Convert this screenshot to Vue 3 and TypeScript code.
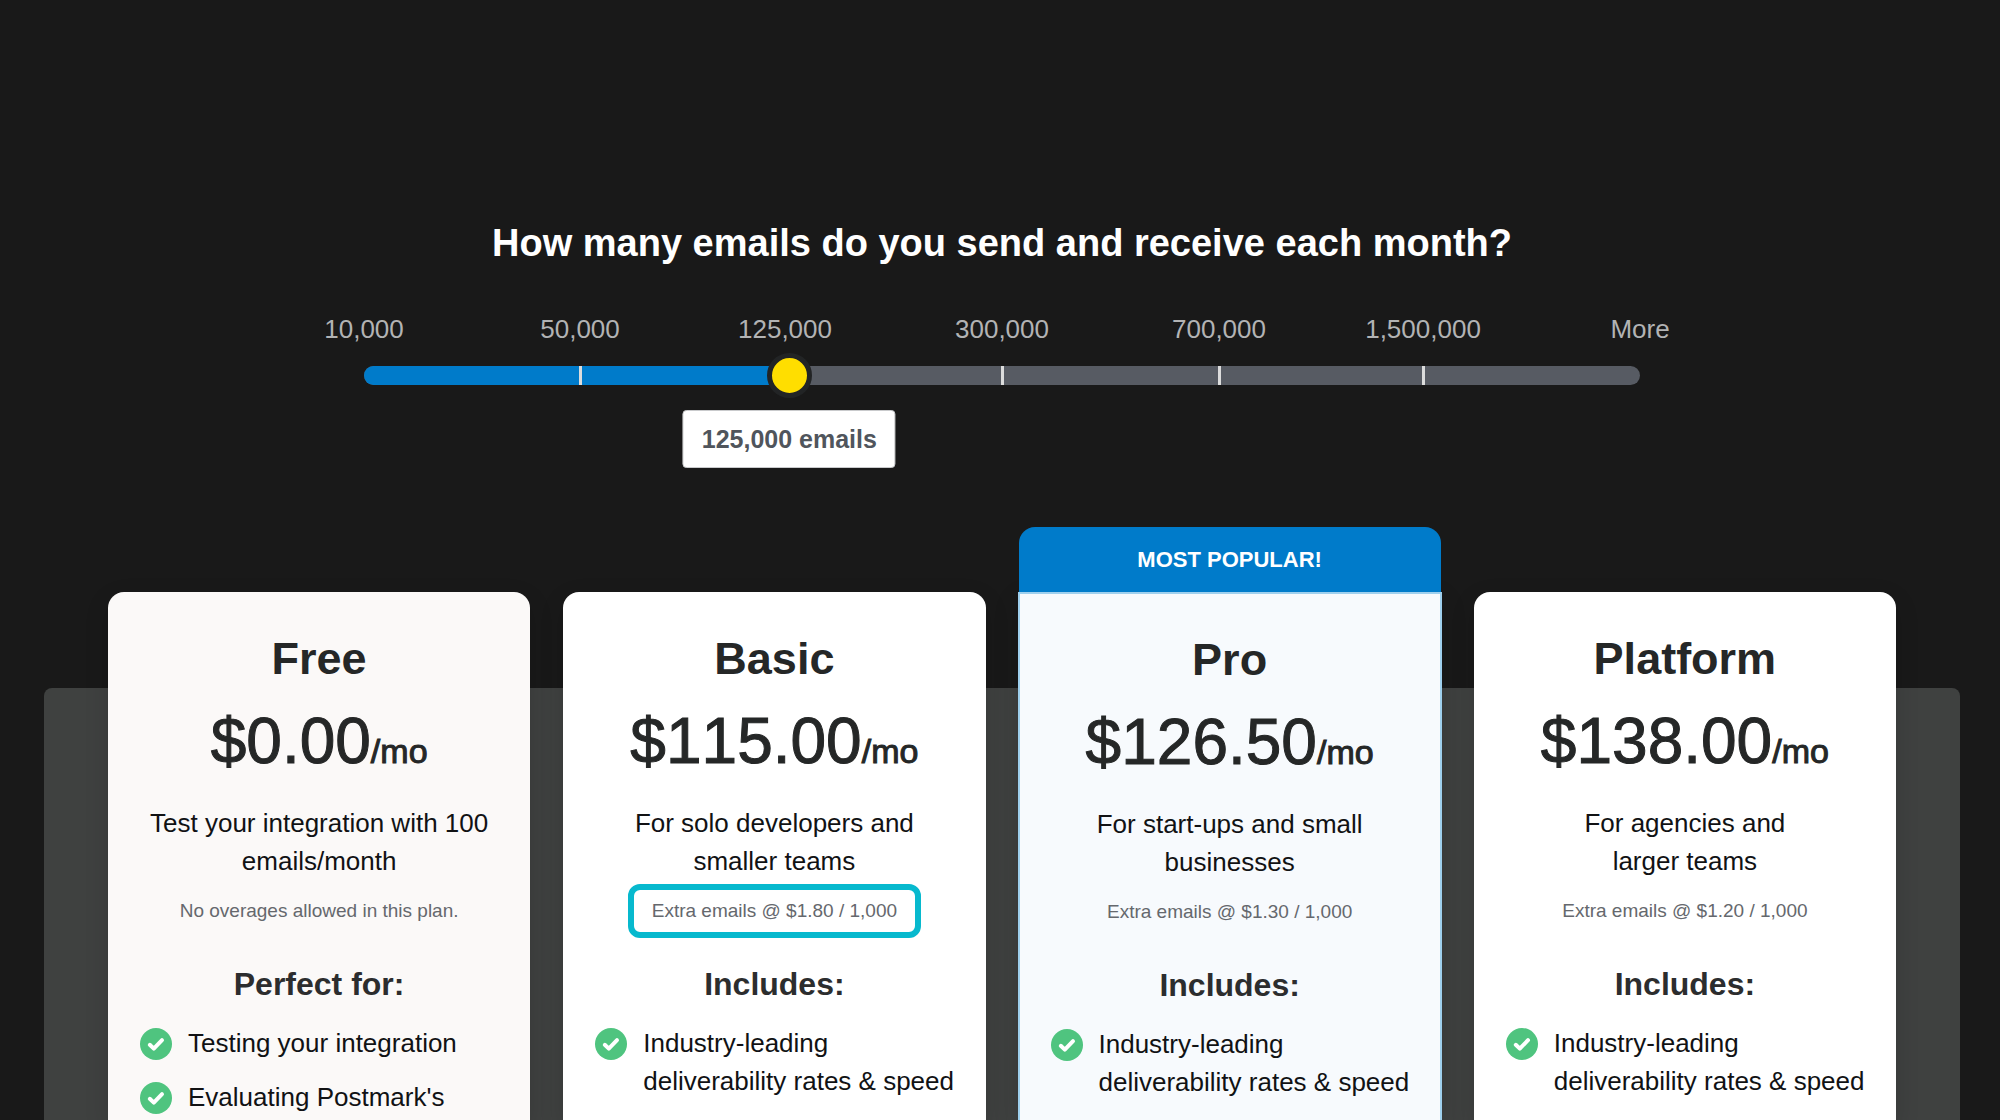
<script setup lang="ts">
import { computed, ref } from 'vue'

interface Step {
  label: string
  share: number
}

interface Plan {
  name: string
  price: string
  summary: string
  note: string
  listTitle: string
  features: string[]
  tone?: 'muted' | 'popular'
  highlighted?: boolean
}

// share is the relative length of the track between a step and the next one
const steps: Step[] = [
  { label: '10,000', share: 216 },
  { label: '50,000', share: 205 },
  { label: '125,000', share: 217 },
  { label: '300,000', share: 217 },
  { label: '700,000', share: 204 },
  { label: '1,500,000', share: 217 },
  { label: 'More', share: 0 },
]

const plans: Plan[] = [
  {
    name: 'Free',
    price: '$0.00',
    summary: 'Test your integration with 100\nemails/month',
    note: 'No overages allowed in this plan.',
    listTitle: 'Perfect for:',
    features: ['Testing your integration', "Evaluating Postmark's"],
    tone: 'muted',
  },
  {
    name: 'Basic',
    price: '$115.00',
    summary: 'For solo developers and\nsmaller teams',
    note: 'Extra emails @ $1.80 / 1,000',
    listTitle: 'Includes:',
    features: ['Industry-leading deliverability rates & speed'],
    highlighted: true,
  },
  {
    name: 'Pro',
    price: '$126.50',
    summary: 'For start-ups and small\nbusinesses',
    note: 'Extra emails @ $1.30 / 1,000',
    listTitle: 'Includes:',
    features: ['Industry-leading deliverability rates & speed'],
    tone: 'popular',
  },
  {
    name: 'Platform',
    price: '$138.00',
    summary: 'For agencies and\nlarger teams',
    note: 'Extra emails @ $1.20 / 1,000',
    listTitle: 'Includes:',
    features: ['Industry-leading deliverability rates & speed'],
  },
]

const selected = ref(2)
const progress = computed(() => `${(selected.value / (steps.length - 1)) * 100}%`)
</script>

<template>
  <main class="page">
    <section class="volume">
      <h1 class="question"><label for="volume">How many emails do you send and receive each month?</label></h1>
      <div class="slider">
        <div class="labels">
          <span v-for="step in steps" :key="step.label" class="stop" :style="{ flexGrow: step.share }">
            <span class="stop-label">{{ step.label }}</span>
          </span>
        </div>
        <div class="rail">
          <div class="track">
            <div class="fill" :style="{ width: progress }"></div>
            <span
              v-for="step in steps.slice(0, -1)"
              :key="step.label"
              class="segment"
              :style="{ flexGrow: step.share }"
            ></span>
          </div>
          <input id="volume" v-model.number="selected" class="range" type="range" min="0" :max="steps.length - 1" step="1" />
          <output class="tooltip" for="volume" :style="{ left: progress }">{{ steps[selected].label }} emails</output>
        </div>
      </div>
    </section>

    <section class="plans">
      <article
        v-for="plan in plans"
        :key="plan.name"
        class="plan"
        :class="{ muted: plan.tone === 'muted', popular: plan.tone === 'popular' }"
      >
        <div v-if="plan.tone === 'popular'" class="badge">MOST POPULAR!</div>
        <h2 class="name">{{ plan.name }}</h2>
        <p class="price">{{ plan.price }}<span class="period">/mo</span></p>
        <p class="summary">{{ plan.summary }}</p>
        <p class="note" :class="{ highlighted: plan.highlighted }">{{ plan.note }}</p>
        <h3 class="list-title">{{ plan.listTitle }}</h3>
        <ul class="features">
          <li v-for="feature in plan.features" :key="feature" class="feature">
            <svg class="check" viewBox="0 0 32 32" aria-hidden="true">
              <circle cx="16" cy="16" r="16" fill="#4fc47f" />
              <path
                d="M9.8 16.8l4 3.8 8.2-8.4"
                fill="none"
                stroke="#fff"
                stroke-width="4"
                stroke-linecap="round"
                stroke-linejoin="round"
              />
            </svg>
            <span>{{ feature }}</span>
          </li>
        </ul>
      </article>
    </section>
  </main>
</template>

<style>
body {
  margin: 0;
  background: #191919;
}
</style>

<style scoped>
.page {
  box-sizing: border-box;
  min-height: 100vh;
  display: flex;
  flex-direction: column;
  padding: 0 40px 0 44px;
  background: #191919;
  color: #111214;
  font-family: 'Liberation Sans', Arial, Helvetica, sans-serif;
  font-size: 26px;
  line-height: 38px;
}

h1,
h2,
h3,
p,
ul {
  margin: 0;
  padding: 0;
}

.volume {
  padding: 219px 320px 207px;
}

.question {
  color: #fff;
  font-size: 38px;
  line-height: 48px;
  text-align: center;
  white-space: nowrap;
}

.slider {
  margin-top: 43px;
}

.labels {
  display: flex;
  color: #b2b3b4;
}

.stop {
  flex: 0 0 0;
}

.stop-label {
  display: flex;
  justify-content: center;
  width: 0;
  white-space: nowrap;
}

.rail {
  position: relative;
  margin-top: 18px;
}

.track {
  position: relative;
  display: flex;
  height: 19px;
  border-radius: 10px;
  background: #575b63;
  overflow: hidden;
}

.fill {
  position: absolute;
  inset: 0 auto 0 0;
  background: #007bca;
}

.segment {
  position: relative;
  flex: 0 0 0;
}

.segment + .segment::before {
  content: '';
  position: absolute;
  inset: 0 auto 0 -1px;
  width: 3px;
  background: #dcdcdc;
}

.range {
  position: absolute;
  top: -13px;
  left: -22px;
  width: calc(100% + 44px);
  height: 45px;
  margin: 0;
  appearance: none;
  background: transparent;
  cursor: pointer;
}

.range::-webkit-slider-thumb {
  appearance: none;
  box-sizing: border-box;
  width: 45px;
  height: 45px;
  border: 5px solid #222425;
  border-radius: 50%;
  background: #ffde00;
}

.tooltip {
  position: absolute;
  top: 44px;
  box-sizing: border-box;
  padding: 9px 18px;
  border: 1px solid #c9cacc;
  border-radius: 4px;
  background: #fff;
  color: #50555c;
  font-size: 25px;
  font-weight: 700;
  white-space: nowrap;
  transform: translateX(-50%);
}

.plans {
  position: relative;
  z-index: 0;
  flex: 1;
  display: grid;
  grid-template-columns: repeat(4, minmax(0, 1fr));
  gap: 33px;
  padding: 0 64px;
}

.plans::before {
  content: '';
  position: absolute;
  z-index: -1;
  inset: 96px 0 0;
  border-radius: 8px 8px 0 0;
  background: #3f4140;
}

.plan {
  position: relative;
  box-sizing: border-box;
  padding: 40px 16px 0;
  border-radius: 16px 16px 0 0;
  background: #fff;
  box-shadow: 0 8px 24px rgba(0, 0, 0, 0.14);
  text-align: center;
}

.muted {
  background: #fbf9f8;
}

.popular {
  margin: 0 -1px;
  padding: 39px 15px 0;
  border: 2px solid #9fd0ee;
  border-bottom: 0;
  border-radius: 0;
  background: #f7fafd;
}

.badge {
  position: absolute;
  inset: auto -1px calc(100% + 2px);
  box-sizing: border-box;
  height: 65px;
  padding: 14px 0;
  border-radius: 16px 16px 0 0;
  background: #007bca;
  color: #fff;
  font-size: 22px;
  font-weight: 700;
}

.name {
  color: #252727;
  font-size: 45px;
  line-height: 54px;
}

.price {
  margin-top: 19px;
  color: #252727;
  font-size: 64px;
  font-kerning: none;
  line-height: 72px;
  white-space: nowrap;
  -webkit-text-stroke: 1px #252727;
}

.period {
  font-size: 34px;
  line-height: 1;
}

.summary {
  margin-top: 27px;
  white-space: pre-line;
}

.note {
  box-sizing: border-box;
  width: fit-content;
  margin: 4px auto 0;
  padding: 2px 18px;
  border: 6px solid transparent;
  border-radius: 12px;
  color: #65686d;
  font-size: 19px;
}

.highlighted {
  border-color: #07b9ce;
}

.list-title {
  margin-top: 27px;
  color: #2c2d2e;
  font-size: 32px;
}

.features {
  display: flex;
  flex-direction: column;
  gap: 16px;
  margin-top: 21px;
  padding-left: 16px;
  list-style: none;
  text-align: left;
}

.feature {
  display: flex;
  gap: 16px;
}

.check {
  flex: none;
  width: 32px;
  height: 32px;
  margin-top: 4px;
}
</style>
